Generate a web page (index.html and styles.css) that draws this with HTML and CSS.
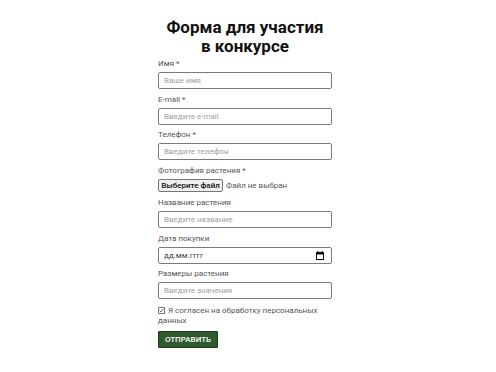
FILE: index.html
```html
<!DOCTYPE html>
<html lang="ru">
<head>
<meta charset="utf-8">
<title>Форма для участия в конкурсе</title>
<link rel="stylesheet" href="styles.css">
</head>
<body class="page">
  <main class="wrap">
    <h1 class="title">Форма для участия<br>в конкурсе</h1>
    <form class="form">
      <div class="field">
        <label class="label">Имя *</label>
        <input class="input" type="text" placeholder="Ваше имя">
      </div>
      <div class="field">
        <label class="label">E-mail *</label>
        <input class="input" type="text" placeholder="Введите e-mail">
      </div>
      <div class="field">
        <label class="label">Телефон *</label>
        <input class="input" type="text" placeholder="Введите телефон">
      </div>
      <div class="field">
        <label class="label">Фотография растения *</label>
        <div class="file">
          <span class="file-btn">Выберите файл</span>
          <span class="file-text">Файл не выбран</span>
        </div>
      </div>
      <div class="field">
        <label class="label">Название растения</label>
        <input class="input" type="text" placeholder="Введите название">
      </div>
      <div class="field">
        <label class="label">Дата покупки</label>
        <div class="input date">
          <span class="date-text">дд.мм.гггг</span>
          <svg class="cal" width="8" height="9" viewBox="0 0 8 9"><rect x="0.5" y="1.5" width="7" height="7" fill="none" stroke="#111" stroke-width="1"/><rect x="0.5" y="1.5" width="7" height="2" fill="#111"/><rect x="1.5" y="0" width="1" height="2" fill="#111"/><rect x="5.5" y="0" width="1" height="2" fill="#111"/></svg>
        </div>
      </div>
      <div class="field">
        <label class="label">Размеры растения</label>
        <input class="input" type="text" placeholder="Введите значения">
      </div>
      <label class="agree">
        <svg class="check" width="7" height="7" viewBox="0 0 7 7"><rect x="0.5" y="0.5" width="6" height="6" fill="#fff" stroke="#777" stroke-width="1"/><path d="M1.6 3.6 L2.9 4.9 L5.4 1.9" fill="none" stroke="#555" stroke-width="0.9"/></svg>
        Я согласен на обработку персональных данных
      </label>
      <button class="submit" type="button">Отправить</button>
    </form>
  </main>
</body>
</html>
```
FILE: styles.css
```css
.page {
  margin: 0;
  padding: 0 6px 0 0;
  background: #fff;
  font-family: Roboto, "Noto Sans", sans-serif;
  color: #555;
}
.wrap {
  width: 174px;
  margin: 0 auto;
}
.title {
  margin: 17.7px -20px 3.6px;
  font-size: 17px;
  line-height: 19px;
  font-weight: 700;
  text-align: center;
  color: #111;
}
.form {
  display: flex;
  flex-direction: column;
}
.field {
  display: flex;
  flex-direction: column;
  margin-bottom: 5.5px;
}
.label {
  font-size: 8px;
  line-height: 10px;
  margin-bottom: 3px;
  color: #555;
}
.input {
  box-sizing: border-box;
  width: 174px;
  height: 17px;
  margin: 0;
  padding: 0 5px;
  border: 1px solid #7a7a7a;
  border-radius: 2px;
  font-family: Roboto, sans-serif;
  font-size: 8px;
  color: #222;
  background: #fff;
  outline: none;
}
.input::placeholder {
  color: #a0a0a0;
}
.date {
  display: flex;
  align-items: center;
  justify-content: space-between;
  padding: 0 7px 0 5px;
}
.date-text {
  color: #444;
  font-size: 8px;
}
.cal {
  display: block;
}
.file {
  display: flex;
  align-items: center;
  height: 14px;
  gap: 3px;
}
.file-btn {
  box-sizing: border-box;
  height: 13px;
  width: 65px;
  display: flex;
  align-items: center;
  justify-content: center;
  background: #efefef;
  border: 1px solid #767676;
  border-radius: 2px;
  font-size: 8px;
  font-weight: 500;
  color: #111;
}
.file-text {
  font-size: 8px;
  color: #555;
}
.agree {
  display: block;
  margin-top: 1.5px;
  font-size: 8px;
  line-height: 9.5px;
  color: #555;
}
.check {
  vertical-align: -0.5px;
  margin-right: 1px;
}
.submit {
  align-self: flex-start;
  margin-top: 6px;
  box-sizing: border-box;
  height: 17px;
  width: 60px;
  padding: 0;
  background: #2e5a2e;
  border: 1px solid #1c3a1c;
  border-radius: 1px;
  color: #fff;
  font-family: Roboto, sans-serif;
  font-size: 8px;
  font-weight: 500;
  text-transform: uppercase;
}
```
